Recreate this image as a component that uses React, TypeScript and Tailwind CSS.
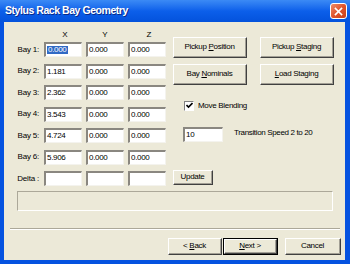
import React from 'react';

const font = "font-['Liberation_Sans',Arial,sans-serif]";

function Field({ value, selected }: { value?: string; selected?: boolean }) {
    return (
        <div className="h-[15px] bg-white border-t-2 border-l-2 border-t-[#8a8780] border-l-[#8a8780] border-b border-r border-b-[#f4f3ee] border-r-[#f4f3ee] flex items-center pl-[1px] text-[8px] tracking-[-0.3px] text-black leading-none overflow-hidden">
            {selected ? <span className="bg-[#316ac5] text-white px-[1px]">{value}</span> : value}
        </div>
    );
}

function Btn({ children, className = '', isDefault }: { children: React.ReactNode; className?: string; isDefault?: boolean }) {
    return (
        <div className={`${className} ${isDefault ? 'border border-black' : ''} bg-[#ece9d8]`}>
            <div className="h-full w-full border-t border-l border-t-white border-l-white border-b border-r border-b-[#404040] border-r-[#404040] flex">
                <div className="flex-1 border-b border-r border-b-[#a29f95] border-r-[#a29f95] flex items-center justify-center text-[8px] tracking-[-0.3px] text-black leading-none whitespace-pre">
                    {children}
                </div>
            </div>
        </div>
    );
}

const rows = [
    ['Bay 1:', '0.000', '0.000', '0.000'],
    ['Bay 2:', '1.181', '0.000', '0.000'],
    ['Bay 3:', '2.362', '0.000', '0.000'],
    ['Bay 4:', '3.543', '0.000', '0.000'],
    ['Bay 5:', '4.724', '0.000', '0.000'],
    ['Bay 6:', '5.906', '0.000', '0.000'],
    ['Delta :', '', '', ''],
];

export default function App() {
    return (
        <div className={`${font} w-[350px] h-[264px] bg-[#0552e0] flex flex-col overflow-hidden`}>
            {/* title bar */}
            <div className="h-[22px] shrink-0 bg-gradient-to-b from-[#3b8af5] via-[#0c5fea] to-[#0452dc] flex items-center justify-between pl-[5px] pr-[3px]">
                <span className="text-white font-bold text-[10.5px] tracking-[-0.45px] [text-shadow:1px_1px_0_#0a2a8a]">Stylus Rack Bay Geometry</span>
                <div className="w-[17px] h-[16px] rounded-[3px] border border-white bg-gradient-to-br from-[#ec8a68] via-[#e0542c] to-[#c8401a] flex items-center justify-center">
                    <svg width="9" height="9" viewBox="0 0 9 9">
                        <path d="M1.5 1.5 L7.5 7.5 M7.5 1.5 L1.5 7.5" stroke="white" strokeWidth="1.7" strokeLinecap="square" />
                    </svg>
                </div>
            </div>

            {/* body */}
            <div className="flex-1 ml-[4px] mr-[5px] mb-[4px] bg-[#ece9d8] flex flex-col">
                <div className="flex">
                    {/* left grid */}
                    <div className="pt-[6px] w-[162px]">
                        <div className="grid grid-cols-[36px_38px_38px_38px] gap-x-[4px] h-[14px] text-[8px] text-black leading-none items-center">
                            <span />
                            <span className="text-center pl-[4px]">X</span>
                            <span className="text-center">Y</span>
                            <span className="text-center pl-[4px]">Z</span>
                        </div>
                        <div className="grid grid-cols-[36px_38px_38px_38px] gap-x-[4px] gap-y-[6.5px]">
                            {rows.map((r, i) => (
                                <React.Fragment key={i}>
                                    <span className="text-[8px] tracking-[-0.2px] text-black leading-none self-center text-right pr-[1px]">{r[0]}</span>
                                    <Field value={r[1]} selected={i === 0} />
                                    <Field value={r[2]} />
                                    <Field value={r[3]} />
                                </React.Fragment>
                            ))}
                        </div>
                    </div>

                    {/* right column */}
                    <div className="ml-[7px] pt-[15px] flex flex-col">
                        <div className="flex gap-x-[13px]">
                            <Btn className="w-[74px] h-[21px]">{'Pickup '}<u>P</u>osition</Btn>
                            <Btn className="w-[74px] h-[21px]">{'Pickup '}<u>S</u>taging</Btn>
                        </div>
                        <div className="flex gap-x-[13px] mt-[6px]">
                            <Btn className="w-[74px] h-[21px]">{'Bay '}<u>N</u>ominals</Btn>
                            <Btn className="w-[74px] h-[21px]"><u>L</u>oad Staging</Btn>
                        </div>
                        <div className="flex items-center mt-[15px] ml-[11px] h-[11px]">
                            <div className="w-[10px] h-[10px] bg-white border-t border-l border-t-[#808080] border-l-[#808080] border-b border-r border-b-white border-r-white flex items-center justify-center">
                                <svg width="7" height="7" viewBox="0 0 7 7">
                                    <path d="M0.5 3 L2.5 5 L6.5 1" stroke="black" strokeWidth="1.6" fill="none" />
                                </svg>
                            </div>
                            <span className="ml-[4px] text-[8px] tracking-[-0.3px] text-black leading-none">Move Blending</span>
                        </div>
                        <div className="flex items-center mt-[16px] ml-[10px]">
                            <div className="w-[40px]"><Field value="10" /></div>
                            <span className="ml-[11px] text-[8px] tracking-[-0.35px] text-black leading-none -mt-[3px]">Transition Speed 2 to 20</span>
                        </div>
                        <Btn className="w-[40px] h-[15px] mt-[28px]">Update</Btn>
                    </div>
                </div>

                {/* status box */}
                <div className="ml-[13px] w-[316px] h-[20px] mt-[5px] border border-t-[#aca899] border-l-[#aca899] border-b-white border-r-white" />

                {/* separator */}
                <div className="ml-[6px] w-[330px] mt-[17px] border-t border-t-[#aca899] border-b border-b-white" />

                {/* bottom buttons */}
                <div className="flex mt-[8px] ml-[164px]">
                    <Btn className="w-[54px] h-[17px]">{'< '}<u>B</u>ack</Btn>
                    <Btn className="w-[55px] h-[17px] ml-[1px]" isDefault><u>N</u>{'ext >'}</Btn>
                    <Btn className="w-[56px] h-[17px] ml-[7px]">Cancel</Btn>
                </div>
            </div>
        </div>
    );
}
